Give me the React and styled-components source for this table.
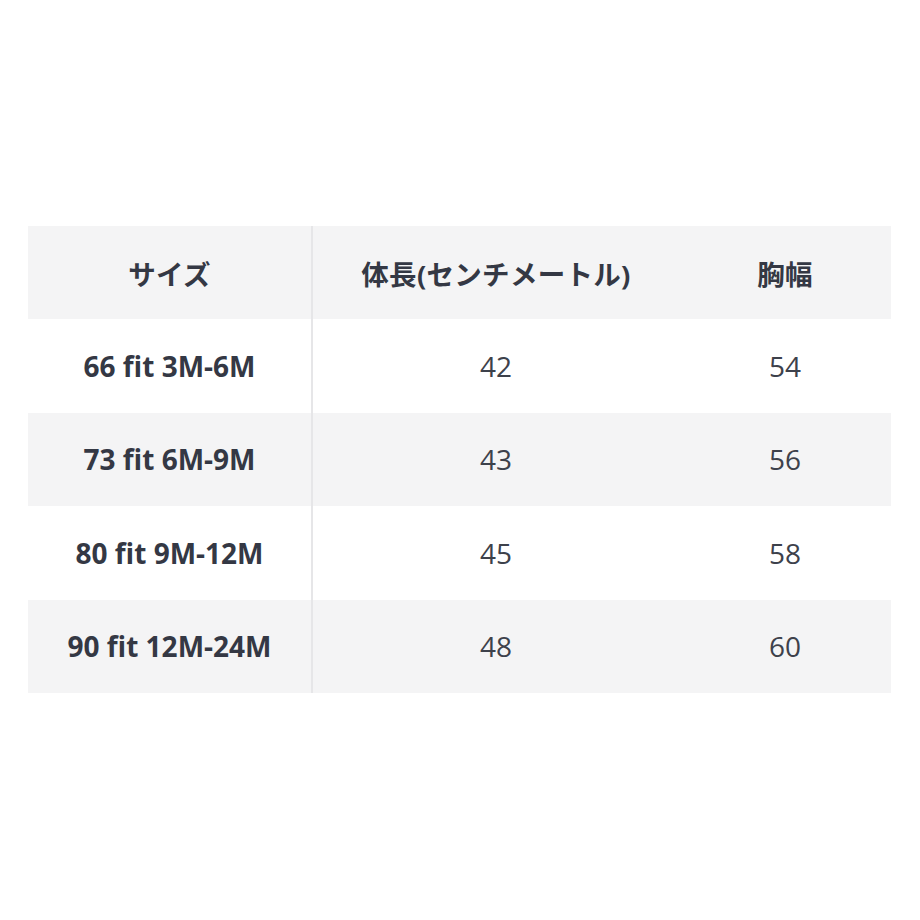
import React from 'react'
import styled, {createGlobalStyle} from 'styled-components'

const GlobalStyle = createGlobalStyle`
  html, body {
    margin: 0;
    padding: 0;
    background: #ffffff;
  }
  body {
    font-family: "Open Sans", "Noto Sans CJK JP", sans-serif;
    color: #363a45;
  }
`

const Page = styled.div`
  width: 920px;
  height: 920px;
  padding: 226px 29px 0 28px;
  box-sizing: border-box;
`

const Table = styled.div`
  display: flex;
  flex-direction: column;
  width: 863px;
`

const Row = styled.div`
  display: grid;
  grid-template-columns: 283px 2px 366px 1fr;
  height: 93.4px;
  background: ${p => (p.shaded ? '#f4f4f5' : '#ffffff')};
`

const Divider = styled.div`
  background: #e6e6e8;
`

const Cell = styled.div`
  display: flex;
  align-items: center;
  justify-content: center;
  font-size: ${p => (p.head ? '27.5px' : '28px')};
  font-weight: ${p => (p.bold ? 700 : 400)};
  color: ${p => (p.bold ? '#343844' : '#3d414b')};
  letter-spacing: ${p => (p.head ? '0.3px' : '0')};
`

const header = ['サイズ', '体長(センチメートル)', '胸幅']

const rows = [
  ['66 fit 3M-6M', '42', '54'],
  ['73 fit 6M-9M', '43', '56'],
  ['80 fit 9M-12M', '45', '58'],
  ['90 fit 12M-24M', '48', '60'],
]

export default function App() {
  return (
    <Page>
      <GlobalStyle />
      <Table>
        <Row shaded>
          <Cell head bold>{header[0]}</Cell>
          <Divider />
          <Cell head bold>{header[1]}</Cell>
          <Cell head bold>{header[2]}</Cell>
        </Row>
        {rows.map((r, i) => (
          <Row key={r[0]} shaded={i % 2 === 1}>
            <Cell bold>{r[0]}</Cell>
            <Divider />
            <Cell>{r[1]}</Cell>
            <Cell>{r[2]}</Cell>
          </Row>
        ))}
      </Table>
    </Page>
  )
}
